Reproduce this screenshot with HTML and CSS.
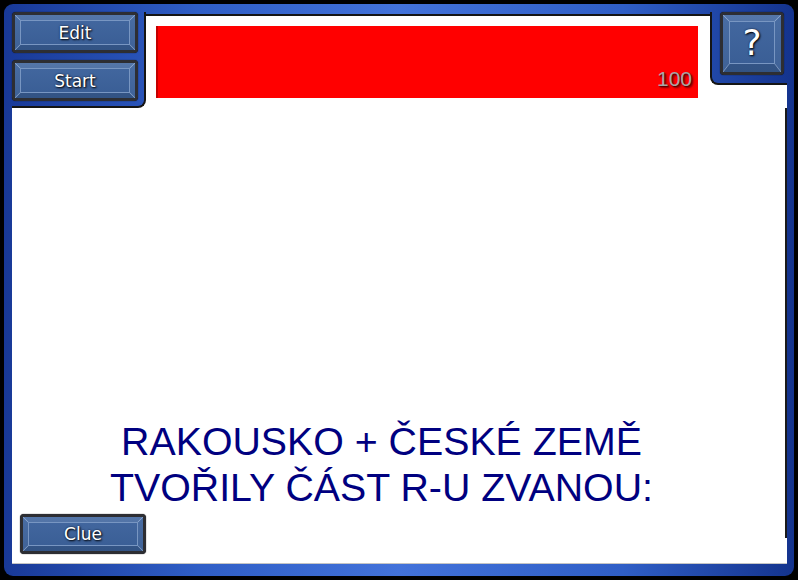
FILE: index.html
```html
<!DOCTYPE html>
<html lang="cs">
<head>
<meta charset="utf-8">
<title>Quiz</title>
<link rel="stylesheet" href="styles.css">
</head>
<body>
<div class="frame">
  <div class="board">
    <div class="side-left">
      <div class="btn wide"><span class="bevel">Edit</span></div>
      <div class="btn wide"><span class="bevel">Start</span></div>
    </div>
    <div class="top-center">
      <div class="score-bar"><span class="score">100</span></div>
    </div>
    <div class="side-right">
      <div class="btn help"><span class="bevel">?</span></div>
    </div>
    <div class="main">
      <p class="question">RAKOUSKO + ČESKÉ ZEMĚ<br>TVOŘILY ČÁST R-U ZVANOU:</p>
      <div class="btn wide clue"><span class="bevel">Clue</span></div>
    </div>
  </div>
</div>
</body>
</html>
```

FILE: styles.css
```css
html, body {
  margin: 0;
  padding: 0;
  background: #000;
}
body {
  width: 798px;
  height: 580px;
  overflow: hidden;
}
.frame {
  margin: 4px 0 0 4px;
  width: 790px;
  height: 572px;
  box-sizing: border-box;
  padding: 8px 7px 12px 8px;
  border-radius: 9px;
  background: linear-gradient(90deg, #183896 0%, #2f5ec6 25%, #4272da 50%, #2f5ec6 78%, #13328c 100%) fixed;
}
.board {
  display: grid;
  grid-template-columns: 134px 1fr 77px;
  grid-template-rows: 96px 1fr;
  height: 100%;
  background: linear-gradient(#fff, #fff) 0 2px / 100% 100% no-repeat;
}
.side-left {
  grid-column: 1;
  grid-row: 1;
  box-sizing: border-box;
  background: linear-gradient(90deg, #183896 0%, #2f5ec6 25%, #4272da 50%, #2f5ec6 78%, #13328c 100%) fixed;
  border-right: 2px solid #151515;
  border-bottom: 2px solid #151515;
  border-bottom-right-radius: 8px;
  display: flex;
  flex-direction: column;
  gap: 7px;
}
.top-center {
  grid-column: 2;
  grid-row: 1;
  margin-top: 2px;
  border-top: 2px solid #151515;
  background: #fff;
  padding: 10px 0 0 10px;
}
.score-bar {
  width: 542px;
  height: 72px;
  box-sizing: border-box;
  background: #ff0000;
  border-left: 2px solid #c40000;
  display: flex;
  justify-content: flex-end;
  align-items: flex-end;
  padding: 0 6px 7px 0;
}
.score {
  font: 21px/24px "Liberation Sans", Arial, sans-serif;
  color: #a6a6a6;
  text-shadow: 1px 1px 1px #5a0000, 2px 2px 2px #800000;
}
.side-right {
  grid-column: 3;
  grid-row: 1;
  align-self: start;
  height: 73px;
  box-sizing: border-box;
  background: linear-gradient(90deg, #183896 0%, #2f5ec6 25%, #4272da 50%, #2f5ec6 78%, #13328c 100%) fixed;
  border-left: 2px solid #151515;
  border-bottom: 2px solid #151515;
  border-bottom-left-radius: 8px;
  padding-left: 8px;
}
.main {
  grid-column: 1 / 4;
  grid-row: 2;
  display: flex;
  flex-direction: column;
  justify-content: flex-end;
  align-items: flex-start;
  padding: 0 0 10px 8px;
  background: linear-gradient(#1a1a1a, #1a1a1a) right top / 2px 430px no-repeat, #fff;
  box-shadow: inset 0 -1px 0 #c4c4c4;
}
.question {
  align-self: stretch;
  margin: 0 0 4px 0;
  padding-right: 44px;
  text-align: center;
  font: 39.3px/46px "Liberation Sans", Arial, sans-serif;
  color: #000080;
}
.btn {
  box-sizing: border-box;
  display: flex;
  border: 3px solid #2d2e33;
  border-radius: 4px;
  background: #3d6199;
  box-shadow: 0 0 1px #000;
}
.btn.wide {
  width: 126px;
  height: 41px;
}
.btn.clue {
  height: 40px;
}
.btn.help {
  width: 64px;
  height: 63px;
}
.bevel {
  flex: 1;
  display: flex;
  align-items: center;
  justify-content: center;
  border-style: solid;
  border-width: 5px;
  border-color: rgba(255, 255, 255, 0.09) rgba(255, 255, 255, 0.03) rgba(0, 0, 0, 0.1) rgba(255, 255, 255, 0.03);
  background:
    linear-gradient(to top right, transparent calc(50% - 0.8px), #7d9bc6 50%, transparent calc(50% + 0.8px)) left top / 6px 6px no-repeat,
    linear-gradient(to bottom right, transparent calc(50% - 0.8px), #7d9bc6 50%, transparent calc(50% + 0.8px)) right top / 6px 6px no-repeat,
    linear-gradient(to bottom right, transparent calc(50% - 0.8px), #7d9bc6 50%, transparent calc(50% + 0.8px)) left bottom / 6px 6px no-repeat,
    linear-gradient(to top right, transparent calc(50% - 0.8px), #7d9bc6 50%, transparent calc(50% + 0.8px)) right bottom / 6px 6px no-repeat,
    linear-gradient(#4368a0, #395d94);
  background-origin: border-box;
  background-clip: border-box;
  box-shadow: inset 0 0 0 1px #7896c2;
  font: 17px "DejaVu Sans", Verdana, sans-serif;
  color: #fff;
  text-shadow: 1px 1px 2px #000, 0 0 2px #102040;
}
.help .bevel {
  border-width: 6px 6px 8px 6px;
  background-size: 7px 7px, 7px 7px, 7px 9px, 7px 9px, auto;
  font-size: 36px;
}
```
